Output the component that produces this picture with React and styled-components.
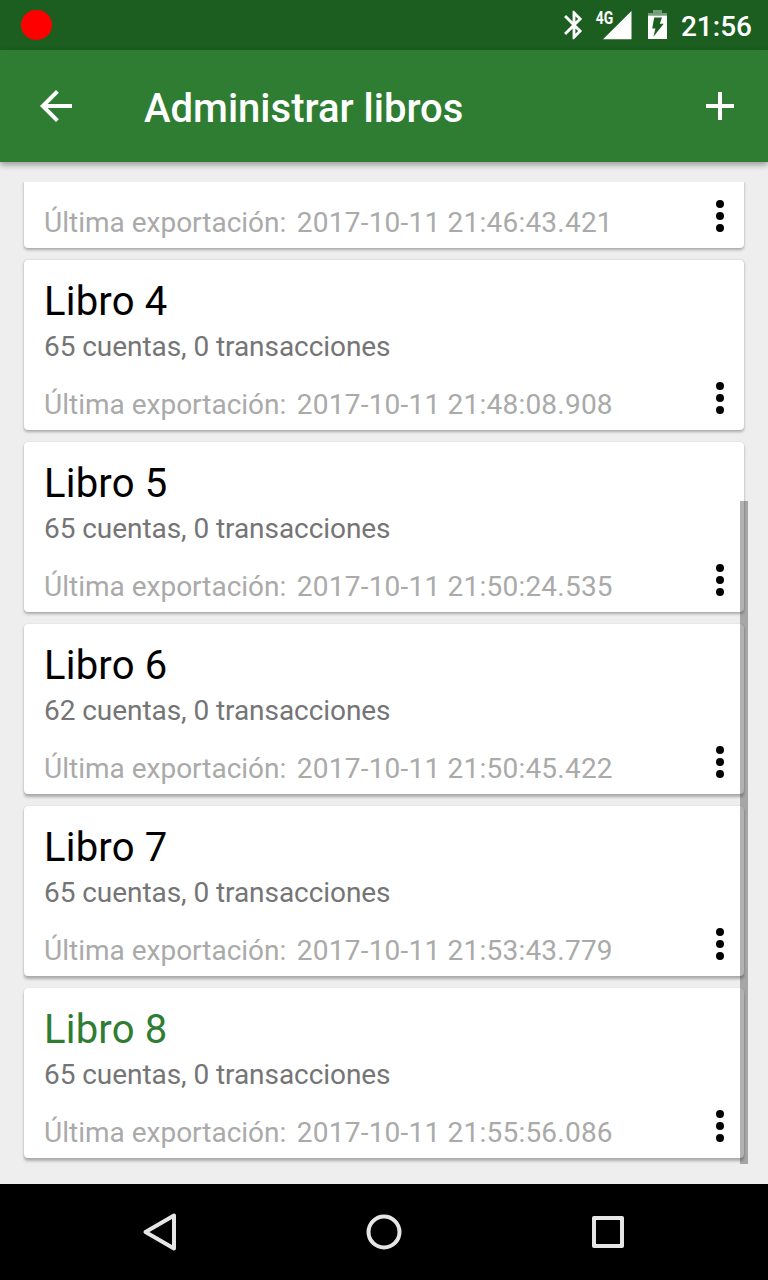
import React from "react";
import styled, { createGlobalStyle } from "styled-components";

const GlobalStyle = createGlobalStyle`
  *, *::before, *::after { box-sizing: border-box; }
  body { margin: 0; background: #eeeeee; font-family: Roboto, "Noto Sans", sans-serif; }
  svg { display: block; flex: none; }
`;

const Screen = styled.div`
  width: 768px;
  height: 1280px;
  display: flex;
  flex-direction: column;
  overflow: hidden;
  background: #eeeeee;
`;

const StatusBar = styled.header`
  height: 50px;
  flex: none;
  display: flex;
  align-items: center;
  padding: 0 16px 0 21px;
  background: #1b5e20;
`;

const RecordDot = styled.span`
  width: 30.5px;
  height: 30.5px;
  margin-right: auto;
  border-radius: 50%;
  background: #ff0000;
`;

const StatusIcons = styled.div`
  display: flex;
  align-items: center;
`;

const Clock = styled.time`
  margin-left: 13px;
  padding-top: 3px;
  font-size: 28px;
  font-weight: 500;
  line-height: 33px;
  color: #ffffff;
`;

const AppBar = styled.nav`
  height: 112px;
  flex: none;
  display: flex;
  align-items: center;
  padding: 0 24px 0 32px;
  background: #2e7d32;
  box-shadow: 0 3px 6px rgba(0, 0, 0, 0.35);
`;

const IconButton = styled.button`
  width: 48px;
  height: 48px;
  padding: 0;
  border: 0;
  background: none;
  color: ${(p) => p.$color || "#ffffff"};
`;

const Title = styled.h1`
  flex: 1;
  margin: 4px 0 0 64px;
  font-size: 40px;
  font-weight: 500;
  line-height: 47px;
  color: #ffffff;
`;

const BookList = styled.main`
  position: relative;
  height: 982px;
  flex: none;
  margin: 20px 20px;
  padding: 0 4px 6px;
  display: flex;
  flex-direction: column;
  gap: 12px;
  overflow: hidden;
`;

const ScrollThumb = styled.div`
  position: absolute;
  right: 0;
  bottom: 0;
  width: 8px;
  height: 663px;
  background: rgba(0, 0, 0, 0.3);
`;

const Card = styled.article`
  height: ${(p) => (p.$partial ? 66 : 170)}px;
  flex: none;
  display: flex;
  align-items: flex-end;
  border-radius: ${(p) => (p.$partial ? "0 0 4px 4px" : "4px")};
  background: #ffffff;
  box-shadow: 0 ${(p) => p.$depth}px 3px rgba(0, 0, 0, 0.28), 0 0 1px rgba(0, 0, 0, 0.2);
`;

const CardBody = styled.div`
  flex: 1;
  padding: 0 0 9px 20px;
`;

const BookName = styled.h2`
  margin: 0;
  font-size: 40px;
  font-weight: 400;
  line-height: 47px;
  letter-spacing: 0.2px;
  color: ${(p) => (p.$active ? "#2e7d32" : "#000000")};
`;

const BookStats = styled.p`
  margin: 5px 0 25px;
  font-size: 28px;
  line-height: 33px;
  letter-spacing: -0.06px;
  color: #757575;
`;

const ExportRow = styled.div`
  display: flex;
  gap: 10.5px;
  font-size: 28px;
  line-height: 33px;
  color: #aaaaaa;
`;

const ExportTime = styled.time`
  letter-spacing: 0.22px;
`;

const MenuButton = styled(IconButton)`
  margin-bottom: 8px;
`;

const NavBar = styled.footer`
  height: 96px;
  flex: none;
  display: flex;
  align-items: center;
  justify-content: center;
  gap: 176px;
  background: #000000;
`;

const books = [
  { exported: "2017-10-11 21:46:43.421", depth: 1.4 },
  { name: "Libro 4", accounts: 65, exported: "2017-10-11 21:48:08.908", depth: 1.7 },
  { name: "Libro 5", accounts: 65, exported: "2017-10-11 21:50:24.535", depth: 2 },
  { name: "Libro 6", accounts: 62, exported: "2017-10-11 21:50:45.422", depth: 2.4 },
  { name: "Libro 7", accounts: 65, exported: "2017-10-11 21:53:43.779", depth: 2.7 },
  { name: "Libro 8", accounts: 65, exported: "2017-10-11 21:55:56.086", depth: 3, active: true },
];

function Bluetooth() {
  return (
    <svg width="35" height="34" viewBox="0 0 24.7 24" fill="#ffffff">
      <path d="M17.71 7.71L12 2h-1v7.59L6.41 5 5 6.41 10.59 12 5 17.59 6.41 19 11 14.41V22h1l5.71-5.71-4.3-4.29 4.3-4.29zM13 5.83l1.88 1.88L13 9.59V5.83zm1.88 10.46L13 18.17v-3.76l1.88 1.88z" />
    </svg>
  );
}

const SignalSlot = styled.span`
  margin-right: 16px;
`;

function Signal() {
  return (
    <SignalSlot>
      <svg width="40" height="50" viewBox="0 0 40 50" fill="#ffffff">
        <text x="3.7" y="23.7" fontFamily="Roboto" fontSize="17.5" fontWeight="700" textLength="17.5" lengthAdjust="spacingAndGlyphs">4G</text>
        <path d="M11 39.3 39.5 11v28.3z" />
      </svg>
    </SignalSlot>
  );
}

function Battery() {
  return (
    <svg width="20" height="50" viewBox="0 0 20 50">
      <path d="M5 10h9v3h5v3H0v-3h5z" fill="#ffffff" opacity=".4" />
      <path d="M0 15.7h19V39H0z" fill="#ffffff" />
      <path d="M6.2 17.6h7.8l-2.2 6.2h3.9L5.4 36.8l2-8.4H4.2z" fill="#1b5e20" />
    </svg>
  );
}

function MoreDots() {
  return (
    <svg width="48" height="48" viewBox="0 0 48 48" fill="currentColor">
      <circle cx="24" cy="12" r="4" />
      <circle cx="24" cy="24" r="4" />
      <circle cx="24" cy="36" r="4" />
    </svg>
  );
}

function BookCard({ book }) {
  return (
    <Card $depth={book.depth} $partial={!book.name}>
      <CardBody>
        {book.name && (
          <>
            <BookName $active={book.active}>{book.name}</BookName>
            <BookStats>{book.accounts} cuentas, 0 transacciones</BookStats>
          </>
        )}
        <ExportRow>
          <span>Última exportación:</span>
          <ExportTime>{book.exported}</ExportTime>
        </ExportRow>
      </CardBody>
      <MenuButton $color="#000000" aria-label="Opciones">
        <MoreDots />
      </MenuButton>
    </Card>
  );
}

export default function App() {
  return (
    <>
      <GlobalStyle />
      <Screen>
        <StatusBar>
          <RecordDot />
          <StatusIcons>
            <Bluetooth />
            <Signal />
            <Battery />
          </StatusIcons>
          <Clock>21:56</Clock>
        </StatusBar>
        <AppBar>
          <IconButton aria-label="Atrás">
            <svg width="48" height="48" viewBox="0 0 24 24" fill="currentColor">
              <path d="M20 11H7.83l5.59-5.59L12 4l-8 8 8 8 1.41-1.41L7.83 13H20v-2z" />
            </svg>
          </IconButton>
          <Title>Administrar libros</Title>
          <IconButton aria-label="Añadir">
            <svg width="48" height="48" viewBox="0 0 24 24" fill="currentColor">
              <path d="M19 13h-6v6h-2v-6H5v-2h6V5h2v6h6v2z" />
            </svg>
          </IconButton>
        </AppBar>
        <BookList>
          {books.map((book) => (
            <BookCard key={book.exported} book={book} />
          ))}
          <ScrollThumb />
        </BookList>
        <NavBar>
          <svg width="48" height="48" viewBox="0 0 48 48" fill="none" stroke="#e6e6e6" strokeWidth="4" strokeLinejoin="round">
            <path d="M9.5 24 38 7.5v33z" />
          </svg>
          <svg width="48" height="48" viewBox="0 0 48 48" fill="none" stroke="#e6e6e6" strokeWidth="4">
            <circle cx="24" cy="24" r="15.5" />
          </svg>
          <svg width="48" height="48" viewBox="0 0 48 48" fill="none" stroke="#e6e6e6" strokeWidth="4" strokeLinejoin="round">
            <path d="M10 10h28v28H10z" />
          </svg>
        </NavBar>
      </Screen>
    </>
  );
}
